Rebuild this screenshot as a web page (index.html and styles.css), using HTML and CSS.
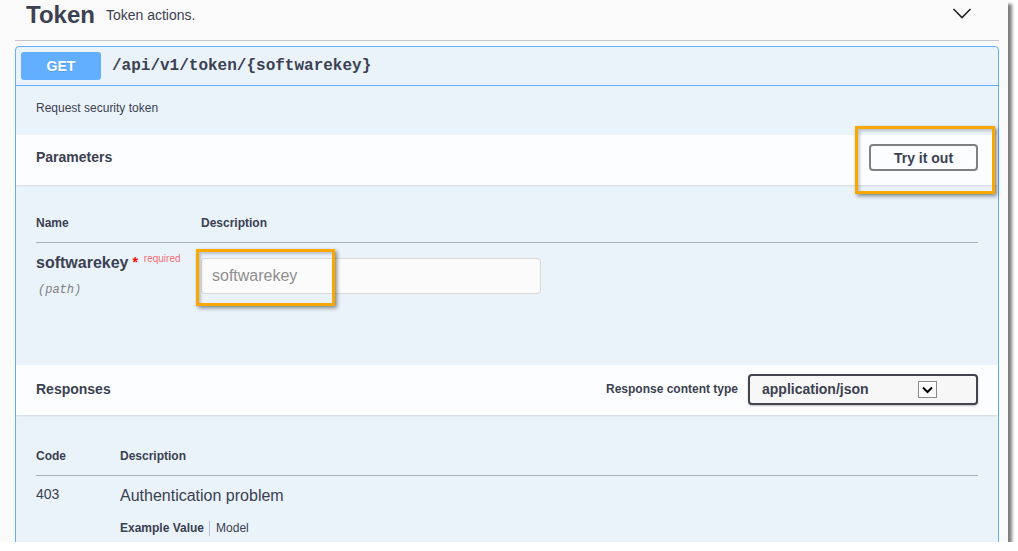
FILE: index.html
```html
<!DOCTYPE html>
<html lang="en">
<head>
<meta charset="utf-8">
<title>Token</title>
<link rel="stylesheet" href="styles.css">
</head>
<body>
<div class="frame">
  <div class="tag">
    <h3 class="tag-title"><span class="tag-name">Token</span><small class="tag-desc">Token actions.</small></h3>
    <svg class="tag-arrow" viewBox="0 0 20 20" width="20" height="20"><path d="M1.5 6 L10 14.5 L18.5 6" fill="none" stroke="#222" stroke-width="1.6"/></svg>
  </div>
  <div class="opblock">
    <div class="summary">
      <span class="method">GET</span>
      <span class="path">/api/v1/token/{softwarekey}</span>
    </div>
    <div class="desc">Request security token</div>
    <div class="section-header">
      <h4 class="section-title">Parameters</h4>
      <button class="try-btn">Try it out</button>
    </div>
    <div class="params">
      <table class="tbl">
        <thead>
          <tr><th class="col-name">Name</th><th>Description</th></tr>
        </thead>
        <tbody>
          <tr>
            <td class="col-name">
              <div class="param-name">softwarekey<span class="star">&nbsp;*</span><span class="required">required</span></div>
              <div class="param-in">(path)</div>
            </td>
            <td><input class="param-input" type="text" placeholder="softwarekey"></td>
          </tr>
        </tbody>
      </table>
    </div>
    <div class="section-header resp-header">
      <h4 class="section-title">Responses</h4>
      <div class="content-type">
        <span class="ct-label">Response content type</span>
        <div class="ct-select">
          <span class="ct-value">application/json</span>
          <span class="ct-arrow"><svg viewBox="0 0 17 15" width="17" height="15"><path d="M4 5.5 L8.5 10 L13 5.5" fill="none" stroke="#000" stroke-width="2"/></svg></span>
        </div>
      </div>
    </div>
    <div class="responses">
      <table class="tbl">
        <thead>
          <tr><th class="col-code code-th">Code</th><th>Description</th></tr>
        </thead>
        <tbody>
          <tr>
            <td class="col-code code-val">403</td>
            <td>
              <div class="resp-desc">Authentication problem</div>
              <ul class="tabs">
                <li class="tab tab-active">Example Value</li>
                <li class="tab">Model</li>
              </ul>
            </td>
          </tr>
        </tbody>
      </table>
    </div>
  </div>
  <span class="hl hl-try"></span>
  <span class="hl hl-input"></span>
</div>
</body>
</html>
```
FILE: styles.css
```css
* { box-sizing: border-box; }
html, body { margin: 0; padding: 0; background: #ffffff; }
body { font-family: "Liberation Sans", Arial, sans-serif; color: #3b4151; }

.frame {
  position: relative;
  width: 1008px;
  height: 542px;
  overflow: hidden;
  background: #fafafa;
  padding: 0 9px 0 15px;
  box-shadow: 4px 4px 3px rgba(0,0,0,.5);
}

.tag {
  display: flex;
  align-items: flex-start;
  height: 41px;
  padding-left: 11px;
  border-bottom: 1px solid #c4c5c8;
}
.tag-title {
  margin: 0;
  display: flex;
  align-items: center;
  height: 30px;
  font-size: 24px;
  font-weight: 700;
  line-height: 30px;
}
.tag-desc { font-size: 14px; font-weight: 400; margin-left: 11px; line-height: 16px; }
.tag-arrow { margin-left: auto; margin-right: 27px; margin-top: 3px; }

.opblock {
  margin-top: 5px;
  border: 1px solid #61affe;
  border-radius: 4px;
  background: rgba(97,175,254,.1);
}
.summary {
  display: flex;
  align-items: center;
  padding: 5px;
  border-bottom: 1px solid #61affe;
}
.method {
  width: 80px;
  height: 28px;
  line-height: 28px;
  background: #61affe;
  color: #fff;
  font-size: 14px;
  font-weight: 700;
  text-align: center;
  border-radius: 3px;
  text-shadow: 0 1px 0 rgba(0,0,0,.1);
}
.path {
  margin-left: 11px;
  font-family: "Liberation Mono", "Courier New", monospace;
  font-size: 16px;
  font-weight: 700;
}
.desc { padding: 15px 20px 19px; font-size: 12px; line-height: 15px; }

.section-header {
  display: flex;
  align-items: center;
  height: 50px;
  padding: 8px 20px 13px;
  background: rgba(255,255,255,.8);
  box-shadow: 0 1px 2px rgba(0,0,0,.1);
}
.resp-header { padding: 8px 20px 10px; }
.section-title { margin: 0; font-size: 14px; font-weight: 700; line-height: 17px; flex: 1; }
.try-btn {
  width: 109px;
  height: 27px;
  padding: 0;
  background: transparent;
  border: 2px solid #808080;
  border-radius: 4px;
  font-family: "Liberation Sans", Arial, sans-serif;
  font-size: 14px;
  font-weight: 700;
  color: #3b4151;
}

.params { padding: 18px 20px 57px; }
.responses { padding: 21px 20px 20px; }
.tbl { width: 100%; border-collapse: collapse; }
.tbl th {
  text-align: left;
  font-size: 12px;
  font-weight: 700;
  line-height: 16px;
  padding: 12px 0 11px;
  border-bottom: 1px solid rgba(59,65,81,.2);
}
.tbl td { vertical-align: top; padding: 10px 0; }
.col-name { width: 165px; }
.col-code { width: 84px; }
.code-th { font-size: 14px; }

.param-name { font-size: 16px; font-weight: 700; line-height: 19px; white-space: nowrap; }
.star { color: red; font-size: 14px; vertical-align: top; }
.required {
  color: rgba(255,0,0,.6);
  font-size: 10px;
  font-weight: 400;
  position: relative;
  top: -6px;
  padding-left: 6px;
}
.param-in {
  margin-top: 9px;
  margin-left: 2px;
  font-family: "Liberation Mono", "Courier New", monospace;
  font-size: 12px;
  font-style: italic;
  line-height: 15px;
  color: #808080;
}
.param-input {
  display: block;
  margin: 5px 0 0;
  width: 340px;
  height: 36px;
  padding: 8px 10px;
  border: 1px solid #d9d9d9;
  border-radius: 4px;
  background: #fbfbfb;
  font-family: "Liberation Sans", Arial, sans-serif;
  font-size: 16px;
  color: #3b4151;
}
.param-input::placeholder { color: #8f8f8f; }

.content-type { display: flex; align-items: center; }
.ct-label { font-size: 12px; font-weight: 700; }
.ct-select {
  display: flex;
  align-items: center;
  margin-left: 10px;
  width: 230px;
  height: 31px;
  padding-left: 12px;
  border: 2px solid #41444e;
  border-radius: 4px;
  background: #f7f7f7;
  box-shadow: 0 1px 2px rgba(0,0,0,.25);
}
.ct-value { font-size: 14px; font-weight: 700; }
.ct-arrow {
  display: flex;
  margin-left: auto;
  margin-right: 39px;
  width: 19px;
  height: 17px;
  border: 1px solid #8a8a8a;
  background: #fdfdfd;
}

.code-val { font-size: 14px; line-height: 17px; }
.resp-desc { font-size: 16px; line-height: 19px; }
.tabs { display: flex; list-style: none; margin: 16px 0 0; padding: 0; }
.tab { font-size: 12px; line-height: 15px; }
.tab-active { font-weight: 700; padding-right: 5px; border-right: 1px solid rgba(0,0,0,.2); }
.tab + .tab { padding-left: 6px; }

.hl {
  position: absolute;
  border: 3px solid #f8a800;
  box-shadow: 2px 2px 4px rgba(0,0,0,.45), inset 2px 2px 3px rgba(0,0,0,.2);
}
.hl-try { left: 855px; top: 126px; width: 140px; height: 68px; }
.hl-input { left: 196px; top: 249px; width: 139px; height: 57px; }
```
